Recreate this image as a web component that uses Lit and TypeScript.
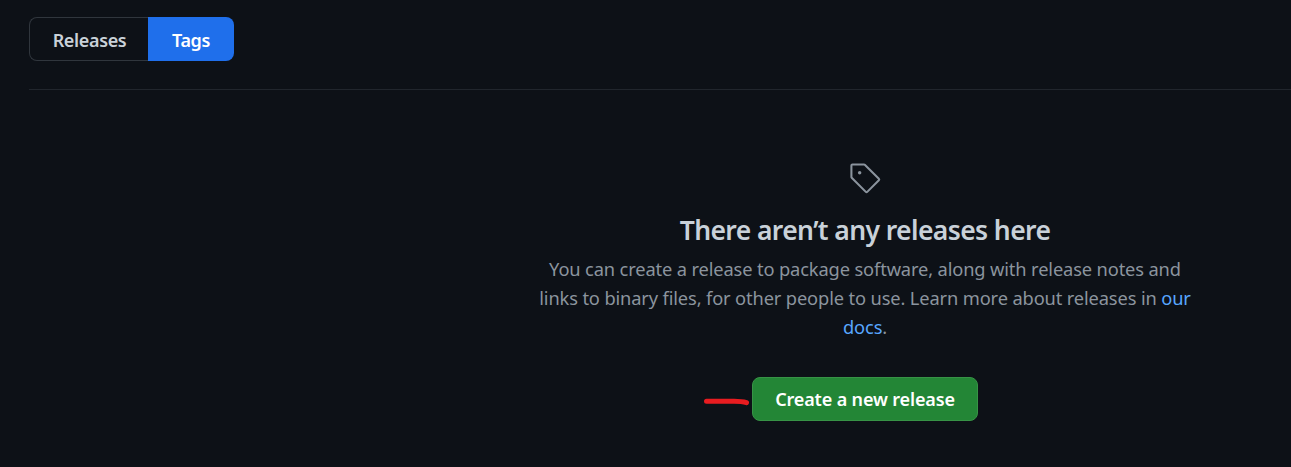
import { LitElement, html, css } from "lit";
import { customElement } from "lit/decorators.js";

@customElement("app-root")
export class AppRoot extends LitElement {
  static styles = css`
    :host {
      display: block;
      box-sizing: border-box;
      height: 467px;
      padding: 17px 0 0 29px;
      overflow: hidden;
      background: #0d1117;
      color: #c9d1d9;
      font-family: "Noto Sans", "Open Sans", sans-serif;
      font-size: 18.3px;
    }
    .page { width: 1672px; }
    .bar { display: flex; height: 72px; align-items: flex-start; border-bottom: 1px solid #21262d; }
    .tab {
      display: flex;
      box-sizing: border-box;
      height: 44px;
      align-items: center;
      justify-content: center;
      font-weight: 600;
      font-size: 18px;
      letter-spacing: -0.35px;
      padding-top: 2px;
      text-decoration: none;
      white-space: nowrap;
    }
    .releases { width: 119px; padding-left: 1px; border: 1px solid #30363d; border-right: 0; border-radius: 8px 0 0 8px; color: #c9d1d9; }
    .tags { width: 86px; border-radius: 0 8px 8px 0; background: #1f6feb; color: #fff; }
    .blank { display: flex; flex-direction: column; align-items: center; padding-top: 72px; }
    .icon { display: block; width: 33px; height: 33px; fill: #8b949e; }
    h2 { margin: 17px 0 0; font-size: 26.5px; line-height: 36px; letter-spacing: -0.6px; font-weight: 600; white-space: nowrap; }
    p { margin: 6px 0 0; line-height: 29px; letter-spacing: -0.14px; color: #8b949e; text-align: center; white-space: nowrap; }
    .line { display: block; }
    a.link { color: #58a6ff; text-decoration: none; }
    .action { position: relative; margin-top: 36px; }
    button {
      display: block;
      box-sizing: border-box;
      width: 226px;
      height: 44px;
      padding: 0;
      border: 1px solid #379346;
      border-radius: 8px;
      background: #238636;
      color: #fff;
      font: 600 18px "Noto Sans", "Open Sans", sans-serif;
      letter-spacing: -0.15px;
      white-space: nowrap;
    }
    .mark { position: absolute; left: -49px; top: 19px; width: 48px; height: 12px; }
  `;

  render() {
    return html`
      <main class="page">
        <nav class="bar">
          <a class="tab releases"><span>Releases</span></a>
          <a class="tab tags"><span>Tags</span></a>
        </nav>
        <section class="blank">
          <svg class="icon" viewBox="0 0 24 24">
            <path d="M7.75 6.5a1.25 1.25 0 1 0 0 2.5 1.25 1.25 0 0 0 0-2.5Z" />
            <path fill-rule="evenodd" d="M2.5 1h8.44a1.5 1.5 0 0 1 1.06.44l10.25 10.25a1.5 1.5 0 0 1 0 2.12l-8.44 8.44a1.5 1.5 0 0 1-2.12 0L1.44 12A1.5 1.5 0 0 1 1 10.94V2.5A1.5 1.5 0 0 1 2.5 1Zm0 1.5v8.44l10.25 10.25 8.44-8.44L10.94 2.5Z" />
          </svg>
          <h2>There aren’t any releases here</h2>
          <p>
            <span class="line">You can create a release to package software, along with release notes and</span>
            <span class="line">links to binary files, for other people to use. Learn more about releases in <a class="link">our</a></span>
            <span class="line"><a class="link">docs</a>.</span>
          </p>
          <div class="action">
            <button>Create a new release</button>
            <svg class="mark" viewBox="0 0 48 12" fill="none" stroke="#e81c20" stroke-width="5" stroke-linecap="round" stroke-linejoin="round">
              <path d="M3.5 5.3H31Q39 5.3 43.5 6.7" />
            </svg>
          </div>
        </section>
      </main>
    `;
  }
}
